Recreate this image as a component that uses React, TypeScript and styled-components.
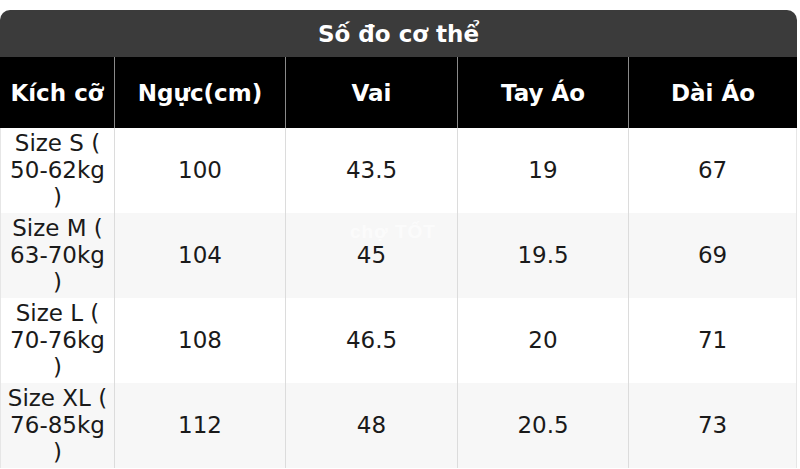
import React from 'react'
import styled, { createGlobalStyle } from 'styled-components'

const GlobalStyle = createGlobalStyle`
  html, body {
    margin: 0;
    padding: 0;
    background: #ffffff;
  }
`

const Wrapper = styled.div`
  position: relative;
  padding-top: 10px;
  width: 797px;
  height: 459px;
  overflow: hidden;

  font-family: 'DejaVu Sans', 'Noto Sans', sans-serif;
`

const Table = styled.table`
  width: 797px;
  border-collapse: separate;
  border-spacing: 0;
  table-layout: fixed;
`

const Title = styled.th`
  height: 47px;
  padding: 0;

  background-color: #3b3b3b;
  border-radius: 10px 10px 0 0;
  color: #ffffff;

  font-size: 23px;
  font-weight: 700;
  text-align: center;
`

const HeadCell = styled.th`
  height: 71px;
  padding: 0 4px;

  background-color: #000000;
  border-left: 1px solid #8a8a8a;
  color: #ffffff;

  font-size: 23px;
  font-weight: 700;
  text-align: center;

  &:first-child {
    border-left: none;
  }
`

const Row = styled.tr<{ shade: boolean }>`
  background-color: ${(props) => (props.shade ? '#f7f7f7' : '#ffffff')};
`

const Cell = styled.td`
  height: 85px;
  padding: 0 5px;

  border-left: 1px solid #dcdcdc;
  color: #1a1a1a;

  font-size: 23px;
  line-height: 27px;
  text-align: center;
  vertical-align: middle;

  &:first-child {
    border-left: 1px solid #e6e6e6;
  }

  &:last-child {
    border-right: 1px solid #e6e6e6;
  }
`

const Watermark = styled.div`
  position: absolute;
  left: 350px;
  top: 222px;

  color: rgba(255, 255, 255, 0.6);
  font-family: 'Liberation Sans', sans-serif;
  font-size: 19px;
  font-weight: 700;
  line-height: 20px;
  letter-spacing: 1px;
`

const widths = [114, 171, 172, 171, 169]
const headers = ['Kích cỡ', 'Ngực(cm)', 'Vai', 'Tay Áo', 'Dài Áo']
const rows = [
  ['Size S ( 50-62kg )', '100', '43.5', '19', '67'],
  ['Size M ( 63-70kg )', '104', '45', '19.5', '69'],
  ['Size L ( 70-76kg )', '108', '46.5', '20', '71'],
  ['Size XL ( 76-85kg )', '112', '48', '20.5', '73'],
]

const App = () => (
  <>
    <GlobalStyle />
    <Wrapper>
      <Table>
        <colgroup>
          {widths.map((w, i) => (
            <col key={i} style={{ width: w }} />
          ))}
        </colgroup>
        <thead>
          <tr>
            <Title colSpan={5}>Số đo cơ thể</Title>
          </tr>
          <tr>
            {headers.map((h) => (
              <HeadCell key={h}>{h}</HeadCell>
            ))}
          </tr>
        </thead>
        <tbody>
          {rows.map((r, i) => (
            <Row key={i} shade={i % 2 === 1}>
              {r.map((c, j) => (
                <Cell key={j}>{c}</Cell>
              ))}
            </Row>
          ))}
        </tbody>
      </Table>
      <Watermark>chợ TỐT</Watermark>
    </Wrapper>
  </>
)

export default App
